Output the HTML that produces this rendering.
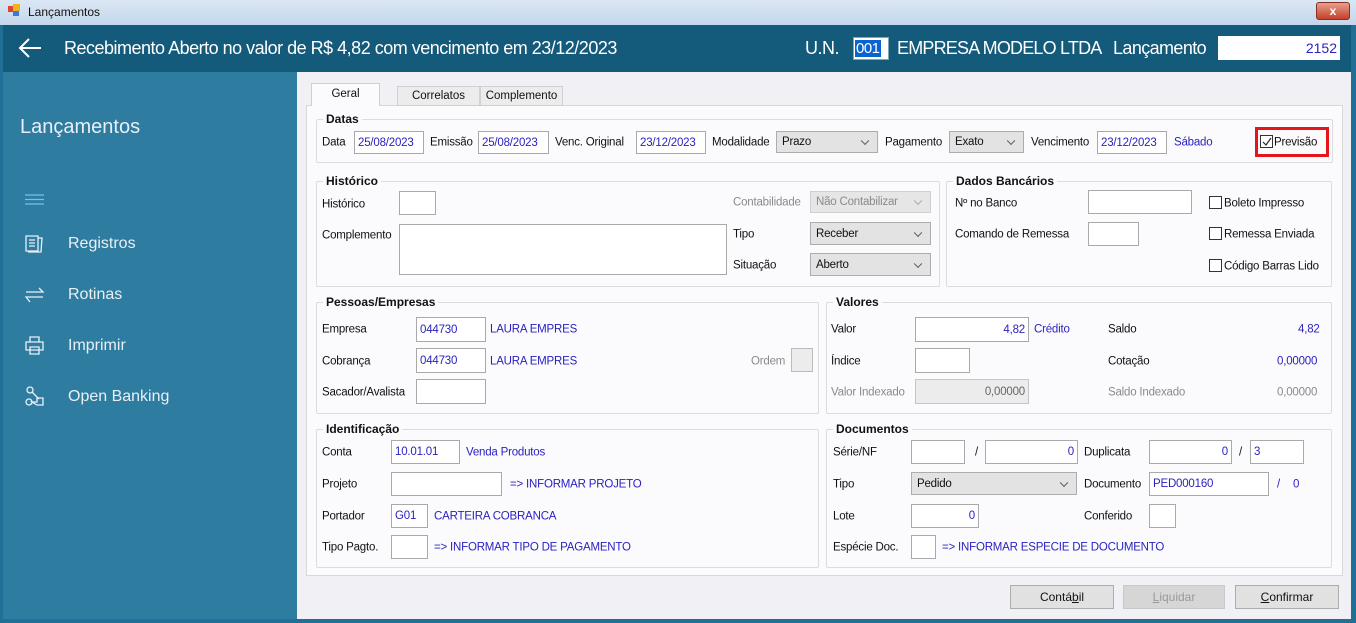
<!DOCTYPE html>
<html><head><meta charset="utf-8"><style>
*{margin:0;padding:0;box-sizing:border-box}
body{width:1356px;height:623px;overflow:hidden;position:relative;background:#1f6f96;font-family:"Liberation Sans",sans-serif;font-size:12px;color:#111}
.a{position:absolute;white-space:nowrap}
.l{position:absolute;white-space:nowrap;font-size:11.5px;letter-spacing:-0.2px;transform:translateY(-45%)}
.g{color:#8a8a8a}
.b{color:#2a22c0}
.in{position:absolute;background:#fff;border:1px solid #a9a9a9;font-size:11.5px;color:#2a22c0;padding:0 3px;display:flex;align-items:center;letter-spacing:-0.2px}
.r{justify-content:flex-end}
.sel{position:absolute;background:#e3e3e3;border:1px solid #adadad;font-size:11.5px;padding:0 5px;display:flex;align-items:center;letter-spacing:-0.2px}
.sel:after{content:"";position:absolute;right:9px;top:50%;width:5px;height:5px;border-right:1px solid #555;border-bottom:1px solid #555;transform:translateY(-70%) rotate(45deg)}
.dis{color:#8a8a8a;background:#e6e6e6;border-color:#cfcfcf}
.dis:after{border-color:#aaa}
.grp{position:absolute;border:1px solid #dcdcdc;border-radius:2px}
.lg{position:absolute;top:-8px;left:6px;background:#fbfbfd;padding:0 3px;font-weight:bold;font-size:12px}
.cb{position:absolute;width:13px;height:13px;border:1px solid #333;background:#fff}
.btn{position:absolute;top:585px;height:24px;border:1px solid #adadad;background:#e1e1e1;display:flex;align-items:center;justify-content:center;font-size:12px}
.side{position:absolute;left:68px;color:#e8f0f5;font-size:16px;transform:translateY(-45%)}
.h{position:absolute;white-space:nowrap;color:#fff;font-size:18px;top:38px;letter-spacing:-0.5px}
</style></head><body>
<div class="a" style="left:0;top:0;width:1356px;height:25px;background:linear-gradient(#dbe7f4,#c3d7ec)"></div>
<div class="a" style="left:8px;top:6px;width:6px;height:6px;background:#d43"></div>
<div class="a" style="left:13px;top:4px;width:7px;height:7px;background:#f0b020"></div>
<div class="a" style="left:13px;top:11px;width:6px;height:5px;background:#3a7ad8"></div>
<div class="a" style="left:28px;top:5px;font-size:12px">Lançamentos</div>
<div class="a" style="left:1316px;top:2px;width:34px;height:18px;border-radius:3px;background:linear-gradient(#e6a08e,#c5402a);border:1px solid #8a3020;color:#fff;font-weight:bold;font-size:12px;text-align:center;line-height:16px">x</div>

<div class="a" style="left:3px;top:25px;width:1348px;height:47px;background:#145a7a"></div>
<svg class="a" style="left:18px;top:38px" width="24" height="20"><path d="M2 10H23M11 1L2 10L11 19" stroke="#fff" stroke-width="2" fill="none"/></svg>
<div class="h" style="left:64px">Recebimento Aberto no valor de R$ 4,82 com vencimento em 23/12/2023</div>
<div class="h" style="left:805px">U.N.</div>
<div class="a" style="left:853px;top:37px;width:36px;height:23px;background:#fff;border:1px solid #7ab"><span style="position:absolute;left:1px;top:2px;background:#0a64d0;color:#fff;font-size:15px;padding:0 1px;letter-spacing:-0.5px">001</span></div>
<div class="h" style="left:897px;letter-spacing:-0.8px">EMPRESA MODELO LTDA</div>
<div class="h" style="left:1113px;letter-spacing:-0.6px">Lançamento</div>
<div class="a" style="left:1218px;top:36px;width:122px;height:24px;background:#fff;color:#2a22c0;font-size:14px;text-align:right;padding:4px 3px">2152</div>

<div class="a" style="left:3px;top:72px;width:294px;height:547px;background:#2e7ca0"></div>
<div class="a" style="left:20px;top:116px;color:#e8f0f5;font-size:20px">Lançamentos</div>
<svg class="a" style="left:25px;top:194px" width="20" height="12"><path d="M0 1H19M0 5.5H19M0 10H19" stroke="#7fc0e6" stroke-width="1.3"/></svg>
<svg class="a" style="left:25px;top:235px" width="20" height="18" fill="none" stroke="#e8f0f5" stroke-width="1.3"><path d="M1 1H13V16H1ZM13 3H17L16 17H3M4 5H10M4 8H10M4 11H10"/></svg>
<div class="side" style="top:243px">Registros</div>
<svg class="a" style="left:25px;top:286px" width="20" height="18" fill="none" stroke="#e8f0f5" stroke-width="1.3"><path d="M1 6H18L14 2M18 11H1L5 16"/></svg>
<div class="side" style="top:294px">Rotinas</div>
<svg class="a" style="left:25px;top:336px" width="20" height="19" fill="none" stroke="#e8f0f5" stroke-width="1.3"><path d="M5 6V1H14V6M1 6H18V14H1ZM5 11H14V18H5Z"/></svg>
<div class="side" style="top:345px">Imprimir</div>
<svg class="a" style="left:25px;top:386px" width="20" height="21" fill="none" stroke="#e8f0f5" stroke-width="1.3"><circle cx="5" cy="4" r="3"/><circle cx="4" cy="16" r="3"/><path d="M7 6L14 13M7 16H12V12H18V19H12Z"/></svg>
<div class="side" style="top:396px">Open Banking</div>

<div class="a" style="left:297px;top:72px;width:1054px;height:547px;background:#f0f0f5"></div>
<div class="a" style="left:306px;top:105px;width:1037px;height:471px;background:#fbfbfd;border:1px solid #d8d8d8"></div>
<div class="a" style="left:397px;top:86px;width:83px;height:20px;background:#ececec;border:1px solid #d0d0d0;font-size:11.5px;text-align:center;line-height:19px">Correlatos</div>
<div class="a" style="left:480px;top:86px;width:83px;height:20px;background:#ececec;border:1px solid #d0d0d0;font-size:11.5px;text-align:center;line-height:19px">Complemento</div>
<div class="a" style="left:311px;top:83px;width:69px;height:23px;background:#fbfbfd;border:1px solid #d0d0d0;border-bottom:none;font-size:11.5px;text-align:center;line-height:21px">Geral</div>

<!-- Datas -->
<div class="grp" style="left:316px;top:119px;width:1017px;height:44px"><div class="lg">Datas</div></div>
<div class="l" style="left:322px;top:142px">Data</div>
<div class="in" style="left:354px;top:131px;width:70px;height:23px">25/08/2023</div>
<div class="l" style="left:430px;top:142px">Emissão</div>
<div class="in" style="left:478px;top:131px;width:71px;height:23px">25/08/2023</div>
<div class="l" style="left:555px;top:142px">Venc. Original</div>
<div class="in" style="left:636px;top:131px;width:70px;height:23px">23/12/2023</div>
<div class="l" style="left:712px;top:142px">Modalidade</div>
<div class="sel" style="left:776px;top:131px;width:102px;height:22px">Prazo</div>
<div class="l" style="left:885px;top:142px">Pagamento</div>
<div class="sel" style="left:949px;top:131px;width:75px;height:22px">Exato</div>
<div class="l" style="left:1031px;top:142px">Vencimento</div>
<div class="in" style="left:1097px;top:131px;width:70px;height:23px">23/12/2023</div>
<div class="l b" style="left:1174px;top:142px">Sábado</div>
<div class="a" style="left:1255px;top:127px;width:74px;height:30px;border:3px solid #e8141c"></div>
<div class="cb" style="left:1260px;top:135px"></div>
<svg class="a" style="left:1261px;top:136px" width="12" height="12"><path d="M2 6L5 9L10 2" stroke="#222" stroke-width="1.2" fill="none"/></svg>
<div class="l" style="left:1274px;top:142px">Previsão</div>

<!-- Historico -->
<div class="grp" style="left:316px;top:181px;width:624px;height:106px"><div class="lg">Histórico</div></div>
<div class="l" style="left:322px;top:204px">Histórico</div>
<div class="in" style="left:399px;top:191px;width:37px;height:24px"></div>
<div class="l" style="left:322px;top:235px">Complemento</div>
<div class="in" style="left:399px;top:224px;width:328px;height:51px"></div>
<div class="l g" style="left:733px;top:202px">Contabilidade</div>
<div class="sel dis" style="left:810px;top:191px;width:121px;height:22px">Não Contabilizar</div>
<div class="l" style="left:733px;top:234px">Tipo</div>
<div class="sel" style="left:810px;top:222px;width:121px;height:23px">Receber</div>
<div class="l" style="left:733px;top:265px">Situação</div>
<div class="sel" style="left:810px;top:253px;width:121px;height:23px">Aberto</div>

<!-- Dados Bancarios -->
<div class="grp" style="left:946px;top:181px;width:386px;height:106px"><div class="lg">Dados Bancários</div></div>
<div class="l" style="left:955px;top:203px">Nº no Banco</div>
<div class="in" style="left:1088px;top:190px;width:104px;height:24px"></div>
<div class="l" style="left:955px;top:234px">Comando de Remessa</div>
<div class="in" style="left:1088px;top:222px;width:51px;height:24px"></div>
<div class="cb" style="left:1209px;top:196px"></div><div class="l" style="left:1224px;top:203px">Boleto Impresso</div>
<div class="cb" style="left:1209px;top:227px"></div><div class="l" style="left:1224px;top:234px">Remessa Enviada</div>
<div class="cb" style="left:1209px;top:259px"></div><div class="l" style="left:1224px;top:266px">Código Barras Lido</div>

<!-- Pessoas -->
<div class="grp" style="left:316px;top:302px;width:503px;height:112px"><div class="lg">Pessoas/Empresas</div></div>
<div class="l" style="left:322px;top:329px">Empresa</div>
<div class="in" style="left:416px;top:317px;width:70px;height:25px">044730</div>
<div class="l b" style="left:490px;top:329px">LAURA EMPRES</div>
<div class="l" style="left:322px;top:361px">Cobrança</div>
<div class="in" style="left:416px;top:348px;width:70px;height:25px">044730</div>
<div class="l b" style="left:490px;top:361px">LAURA EMPRES</div>
<div class="l g" style="left:751px;top:361px">Ordem</div>
<div class="in" style="left:791px;top:348px;width:22px;height:24px;background:#ececec;border-color:#bbb"></div>
<div class="l" style="left:322px;top:392px">Sacador/Avalista</div>
<div class="in" style="left:416px;top:379px;width:70px;height:25px"></div>

<!-- Valores -->
<div class="grp" style="left:826px;top:302px;width:506px;height:112px"><div class="lg">Valores</div></div>
<div class="l" style="left:831px;top:329px">Valor</div>
<div class="in r" style="left:915px;top:317px;width:114px;height:25px">4,82</div>
<div class="l b" style="left:1034px;top:329px">Crédito</div>
<div class="l" style="left:1108px;top:329px">Saldo</div>
<div class="l b" style="left:1298px;top:329px">4,82</div>
<div class="l" style="left:831px;top:361px">Índice</div>
<div class="in" style="left:915px;top:348px;width:55px;height:25px"></div>
<div class="l" style="left:1108px;top:361px">Cotação</div>
<div class="l b" style="left:1277px;top:361px">0,00000</div>
<div class="l g" style="left:831px;top:392px">Valor Indexado</div>
<div class="in r" style="left:915px;top:379px;width:114px;height:25px;background:#ececec;border-color:#c4c4c4;color:#666">0,00000</div>
<div class="l g" style="left:1108px;top:392px">Saldo Indexado</div>
<div class="l g" style="left:1277px;top:392px">0,00000</div>

<!-- Identificacao -->
<div class="grp" style="left:316px;top:429px;width:503px;height:139px"><div class="lg">Identificação</div></div>
<div class="l" style="left:322px;top:452px">Conta</div>
<div class="in" style="left:391px;top:440px;width:69px;height:24px">10.01.01</div>
<div class="l b" style="left:466px;top:452px">Venda Produtos</div>
<div class="l" style="left:322px;top:484px">Projeto</div>
<div class="in" style="left:391px;top:472px;width:111px;height:24px"></div>
<div class="l b" style="left:510px;top:484px">=&gt; INFORMAR PROJETO</div>
<div class="l" style="left:322px;top:516px">Portador</div>
<div class="in" style="left:391px;top:504px;width:37px;height:24px">G01</div>
<div class="l b" style="left:434px;top:516px">CARTEIRA COBRANCA</div>
<div class="l" style="left:322px;top:547px">Tipo Pagto.</div>
<div class="in" style="left:391px;top:535px;width:37px;height:24px"></div>
<div class="l b" style="left:434px;top:547px">=&gt; INFORMAR TIPO DE PAGAMENTO</div>

<!-- Documentos -->
<div class="grp" style="left:826px;top:429px;width:506px;height:139px"><div class="lg">Documentos</div></div>
<div class="l" style="left:833px;top:452px">Série/NF</div>
<div class="in" style="left:911px;top:440px;width:54px;height:24px"></div>
<div class="l" style="left:975px;top:452px">/</div>
<div class="in r" style="left:985px;top:440px;width:93px;height:24px">0</div>
<div class="l" style="left:1084px;top:452px">Duplicata</div>
<div class="in r" style="left:1149px;top:440px;width:83px;height:24px">0</div>
<div class="l" style="left:1239px;top:452px">/</div>
<div class="in" style="left:1250px;top:440px;width:54px;height:24px">3</div>
<div class="l" style="left:833px;top:484px">Tipo</div>
<div class="sel" style="left:911px;top:472px;width:166px;height:23px">Pedido</div>
<div class="l" style="left:1084px;top:484px">Documento</div>
<div class="in" style="left:1149px;top:472px;width:120px;height:24px">PED000160</div>
<div class="l b" style="left:1277px;top:484px">/</div>
<div class="l b" style="left:1293px;top:484px">0</div>
<div class="l" style="left:833px;top:516px">Lote</div>
<div class="in r" style="left:911px;top:504px;width:68px;height:24px">0</div>
<div class="l" style="left:1084px;top:516px">Conferido</div>
<div class="in" style="left:1149px;top:504px;width:27px;height:24px"></div>
<div class="l" style="left:833px;top:547px">Espécie Doc.</div>
<div class="in" style="left:911px;top:535px;width:25px;height:24px"></div>
<div class="l b" style="left:942px;top:547px">=&gt; INFORMAR ESPECIE DE DOCUMENTO</div>

<div class="btn" style="left:1010px;width:104px">Contá<u>b</u>il</div>
<div class="btn" style="left:1123px;width:102px;background:#d6d6d6;border-color:#c8c8c8;color:#9a9a9a"><u>L</u>iquidar</div>
<div class="btn" style="left:1235px;width:104px"><u>C</u>onfirmar</div>
</body></html>
